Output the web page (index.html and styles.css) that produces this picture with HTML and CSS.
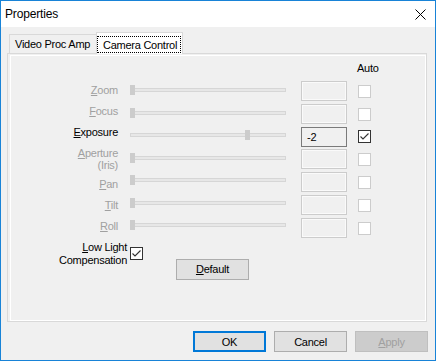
FILE: index.html
```html
<!DOCTYPE html>
<html>
<head>
<meta charset="utf-8">
<link rel="stylesheet" href="styles.css">
</head>
<body>
<div class="window">
  <header class="titlebar">
    <span class="title">Properties</span>
    <svg class="close" width="11" height="11" viewBox="0 0 11 11"><path d="M0.5 0.5 L10.5 10.5 M10.5 0.5 L0.5 10.5" stroke="#000" stroke-width="1" fill="none"/></svg>
  </header>
  <div class="content">
    <div class="tabs">
      <div class="tab">Video Proc Amp</div>
      <div class="tab active"><span class="focus">Camera Control</span></div>
    </div>
    <div class="panel">
      <div class="page">
        <div class="form">
          <div class="col labels">
            <div class="lbl dis"><u>Z</u>oom</div>
            <div class="lbl dis"><u>F</u>ocus</div>
            <div class="lbl"><u>E</u>xposure</div>
            <div class="lbl dis two"><u>A</u>perture<br>(Iris)</div>
            <div class="lbl dis"><u>P</u>an</div>
            <div class="lbl dis"><u>T</u>ilt</div>
            <div class="lbl dis"><u>R</u>oll</div>
          </div>
          <div class="col sliders">
            <div class="slider"><div class="track"><div class="thumb" style="left:0%"></div></div></div>
            <div class="slider"><div class="track"><div class="thumb" style="left:0%"></div></div></div>
            <div class="slider"><div class="track"><div class="thumb" style="left:74.5%"></div></div></div>
            <div class="slider"><div class="track"><div class="thumb" style="left:0%"></div></div></div>
            <div class="slider"><div class="track"><div class="thumb" style="left:0%"></div></div></div>
            <div class="slider"><div class="track"><div class="thumb" style="left:0%"></div></div></div>
            <div class="slider"><div class="track"><div class="thumb" style="left:0%"></div></div></div>
          </div>
          <div class="col edits">
            <div class="edit dis"></div>
            <div class="edit dis"></div>
            <div class="edit">-2</div>
            <div class="edit dis"></div>
            <div class="edit dis"></div>
            <div class="edit dis"></div>
            <div class="edit dis"></div>
          </div>
          <div class="col checks">
            <div class="auto">Auto</div>
            <div class="cb dis"></div>
            <div class="cb dis"></div>
            <div class="cb"><svg width="11" height="11" viewBox="0 0 11 11"><path d="M1.5 5.5 L4 8 L9.5 2.5" stroke="#333" stroke-width="1.1" fill="none"/></svg></div>
            <div class="cb dis"></div>
            <div class="cb dis"></div>
            <div class="cb dis"></div>
            <div class="cb dis"></div>
          </div>
        </div>
        <div class="lowlight">
          <div class="ll-text"><u>L</u>ow Light<br>Compensation</div>
          <div class="cb ll-cb"><svg width="11" height="11" viewBox="0 0 11 11"><path d="M1.5 5.5 L4 8 L9.5 2.5" stroke="#333" stroke-width="1.1" fill="none"/></svg></div>
          <div class="btn default-btn"><u>D</u>efault</div>
        </div>
      </div>
    </div>
    <div class="buttons">
      <div class="btn primary">OK</div>
      <div class="btn">Cancel</div>
      <div class="btn disabled"><u>A</u>pply</div>
    </div>
  </div>
</div>
</body>
</html>
```

FILE: styles.css
```css
* { box-sizing: border-box; }
html, body { margin: 0; padding: 0; }
body {
  width: 436px;
  height: 361px;
  overflow: hidden;
  background: #f0f0f0;
  font-family: "Liberation Sans", Arial, sans-serif;
  font-size: 11px;
  letter-spacing: -0.25px;
  color: #000;
}
u { text-decoration: underline; text-underline-offset: 1px; }

.window {
  position: relative;
  width: 436px;
  height: 361px;
  border: 1px solid #1883d7;
  background: #f0f0f0;
  display: flex;
  flex-direction: column;
}

.titlebar {
  height: 26px;
  flex: none;
  background: #fff;
  display: flex;
  align-items: center;
  justify-content: space-between;
  padding: 0 9px 0 4px;
}
.title { font-size: 12px; letter-spacing: -0.15px; }
.close { display: block; }

.content {
  flex: 1;
  display: flex;
  flex-direction: column;
  padding: 5px 7px 0 6px;
}

.tabs {
  display: flex;
  align-items: flex-end;
  height: 21px;
  padding-left: 2px;
}
.tab {
  height: 19px;
  width: 88px;
  border: 1px solid #d9d9d9;
  border-bottom: none;
  background: #f0f0f0;
  display: flex;
  align-items: center;
  padding-left: 5px;
}
.tab.active {
  position: relative;
  z-index: 1;
  height: 22px;
  width: 87px;
  margin-left: -1px;
  margin-bottom: -1px;
  background: #fff;
  padding: 3px 1px 1px 0;
  align-items: stretch;
}
.focus {
  flex: 1;
  border: 1px dotted #000;
  display: flex;
  align-items: center;
  padding-left: 5px;
}

.panel {
  height: 269px;
  border: 1px solid #d9d9d9;
  padding: 1px 0 0 2px;
  display: flex;
  margin-right: 1px;
}
.page {
  flex: 1;
  border: 1px solid #fff;
  display: flex;
  flex-direction: column;
}

.form { display: flex; align-items: flex-start; }
.col { display: flex; flex-direction: column; }

.labels {
  width: 107px;
  padding-top: 28px;
  gap: 8px;
  text-align: right;
}
.lbl { line-height: 13px; }
.lbl.two { line-height: 12px; margin-bottom: -1px; }
.dis { color: #a0a0a0; }

.sliders {
  width: 156px;
  margin-left: 12px;
  padding-top: 22.75px;
}
.slider { height: 22.5px; display: flex; align-items: center; }
.track {
  position: relative;
  width: 156px;
  height: 4px;
  border: 1px solid #d6d6d6;
  background: #e7e7e7;
}
.thumb {
  position: absolute;
  top: -4px;
  width: 5px;
  height: 10px;
  margin-left: -1px;
  background: #cccccc;
}

.edits {
  width: 46px;
  margin-left: 15px;
  padding-top: 25px;
  gap: 2.83px;
}
.edit {
  height: 20px;
  border: 1px solid #7a7a7a;
  background: #f0f0f0;
  line-height: 18px;
  padding-left: 5px;
}
.edit.dis {
  border-color: #cccccc;
  box-shadow: inset 0 0 0 1px #fafafa;
}

.checks {
  margin-left: 11px;
  padding-top: 6px;
  gap: 9.83px;
}
.auto { line-height: 13px; margin-left: -1px; }
.cb {
  width: 13px;
  height: 13px;
  border: 1px solid #333;
  background: #fff;
}
.cb svg { display: block; }
.cb.dis { border-color: #cccccc; }

.lowlight {
  display: flex;
  align-items: flex-start;
  margin-top: 3.5px;
}
.ll-text {
  width: 116px;
  text-align: right;
  line-height: 12.5px;
}
.ll-cb { margin-left: 3px; margin-top: 5.5px; }
.default-btn { margin-left: 33px; margin-top: 17.5px; height: 18px; }

.buttons {
  display: flex;
  justify-content: flex-end;
  gap: 8px;
  margin-top: 9px;
}
.btn {
  width: 73px;
  height: 21px;
  border: 1px solid #adadad;
  background: #e1e1e1;
  display: flex;
  align-items: center;
  justify-content: center;
}
.btn.primary { border: 2px solid #0078d7; }
.btn.disabled { background: #cccccc; border-color: #bfbfbf; color: #a0a0a0; }
```
